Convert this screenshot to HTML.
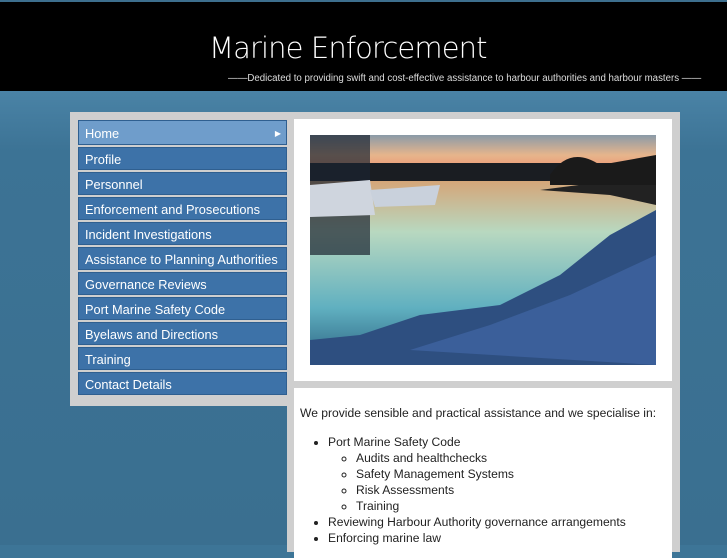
<!DOCTYPE html>
<html><head><meta charset="utf-8"><style>
*{margin:0;padding:0;box-sizing:border-box}
body{width:727px;height:545px;overflow:hidden;background:#3d7597;font-family:"Liberation Sans",sans-serif;position:relative}
.bg{position:absolute;left:0;top:91px;width:727px;height:454px;background:linear-gradient(180deg,#4a83a6 0,#3c7395 60px,#3a6f90 100%)}
.hdr{position:absolute;left:0;top:0;width:727px;height:91px;background:#000;border-top:2px solid #3d6f8e}
.title{position:absolute;left:209px;top:29px;color:#fff;font-size:29px;font-family:"DejaVu Sans","Liberation Sans",sans-serif;font-weight:200;letter-spacing:-0.9px}
.tag{position:absolute;left:228px;top:71px;color:#ddd;font-size:9.7px;white-space:nowrap}
.side{position:absolute;left:70px;top:112px;width:224px;height:294px;background:#cfcfcf}
.rframe{position:absolute;left:287px;top:112px;width:393px;height:440px;background:#cfcfcf}
.menu{position:absolute;left:78px;top:120px;width:209px}
.menu div{height:23px;margin-bottom:2px;background:#3d72a8;color:#fff;font-size:12.8px;line-height:23px;padding-left:6px;border:1px solid #2f5f90}
.menu div.h{background:#6f9dcb;height:25px;line-height:25px;margin-bottom:2px;position:relative}
.menu div.h span{position:absolute;right:5px;font-size:8px}
.box1{position:absolute;left:294px;top:119px;width:378px;height:262px;background:#fff}
.box2{position:absolute;left:294px;top:388px;width:378px;height:170px;background:#fff;color:#222;font-size:12.1px;line-height:16px;padding:17px 6px;white-space:nowrap}
ul{margin-top:13px;padding-left:28px}
ul ul{margin-top:0;list-style:circle}
</style></head><body>
<div class="bg"></div>
<div class="hdr"><div class="title">Marine Enforcement</div>
<div class="tag">——Dedicated to providing swift and cost-effective assistance to harbour authorities and harbour masters ——</div></div>
<div class="side"></div>
<div class="rframe"></div>
<div class="menu">
<div class="h">Home<span>▶</span></div>
<div>Profile</div><div>Personnel</div><div>Enforcement and Prosecutions</div><div>Incident Investigations</div><div>Assistance to Planning Authorities</div><div>Governance Reviews</div><div>Port Marine Safety Code</div><div>Byelaws and Directions</div><div>Training</div><div>Contact Details</div>
</div>
<div class="box1">
<svg style="position:absolute;left:16px;top:16px" width="346" height="230" viewBox="0 0 346 230">
<defs>
<linearGradient id="s" x1="0" y1="0" x2="0" y2="1"><stop offset="0" stop-color="#8a9aa8"/><stop offset=".5" stop-color="#e6b58c"/><stop offset="1" stop-color="#f08a6a"/></linearGradient>
<linearGradient id="w" x1="0" y1="0" x2="0" y2="1"><stop offset="0" stop-color="#d8a070"/><stop offset=".3" stop-color="#b8d8c0"/><stop offset=".7" stop-color="#60b0c0"/><stop offset="1" stop-color="#2a6080"/></linearGradient>
</defs>
<rect width="346" height="40" fill="url(#s)"/>
<rect y="40" width="346" height="190" fill="url(#w)"/>
<rect y="28" width="346" height="18" fill="#1a1d22"/>
<path d="M230 55 L346 40 L346 70 L300 60 Z" fill="#222"/>
<path d="M0 0 L60 0 L60 120 L0 120Z" fill="#1b2330" opacity=".7"/>
<path d="M0 50 L60 45 L65 80 L0 82Z" fill="#cfd5de"/>
<path d="M60 55 L130 50 L125 70 L65 72Z" fill="#c9d1dc"/>
<path d="M346 75 L300 100 L250 140 L190 170 L110 180 L50 200 L0 205 L0 230 L346 230Z" fill="#2e4f80"/>
<path d="M346 120 L260 160 L180 190 L100 215 L346 230Z" fill="#3f63a0" opacity=".8"/>
<path d="M240 40 Q260 10 290 30 L346 20 L346 50 L240 50Z" fill="#1a1a1a"/>
</svg>
</div>
<div class="box2">
We provide sensible and practical assistance and we specialise in:
<ul><li>Port Marine Safety Code<ul><li>Audits and healthchecks</li><li>Safety Management Systems</li><li>Risk Assessments</li><li>Training</li></ul></li>
<li>Reviewing Harbour Authority governance arrangements</li><li>Enforcing marine law</li></ul>
</div>
</body></html>
